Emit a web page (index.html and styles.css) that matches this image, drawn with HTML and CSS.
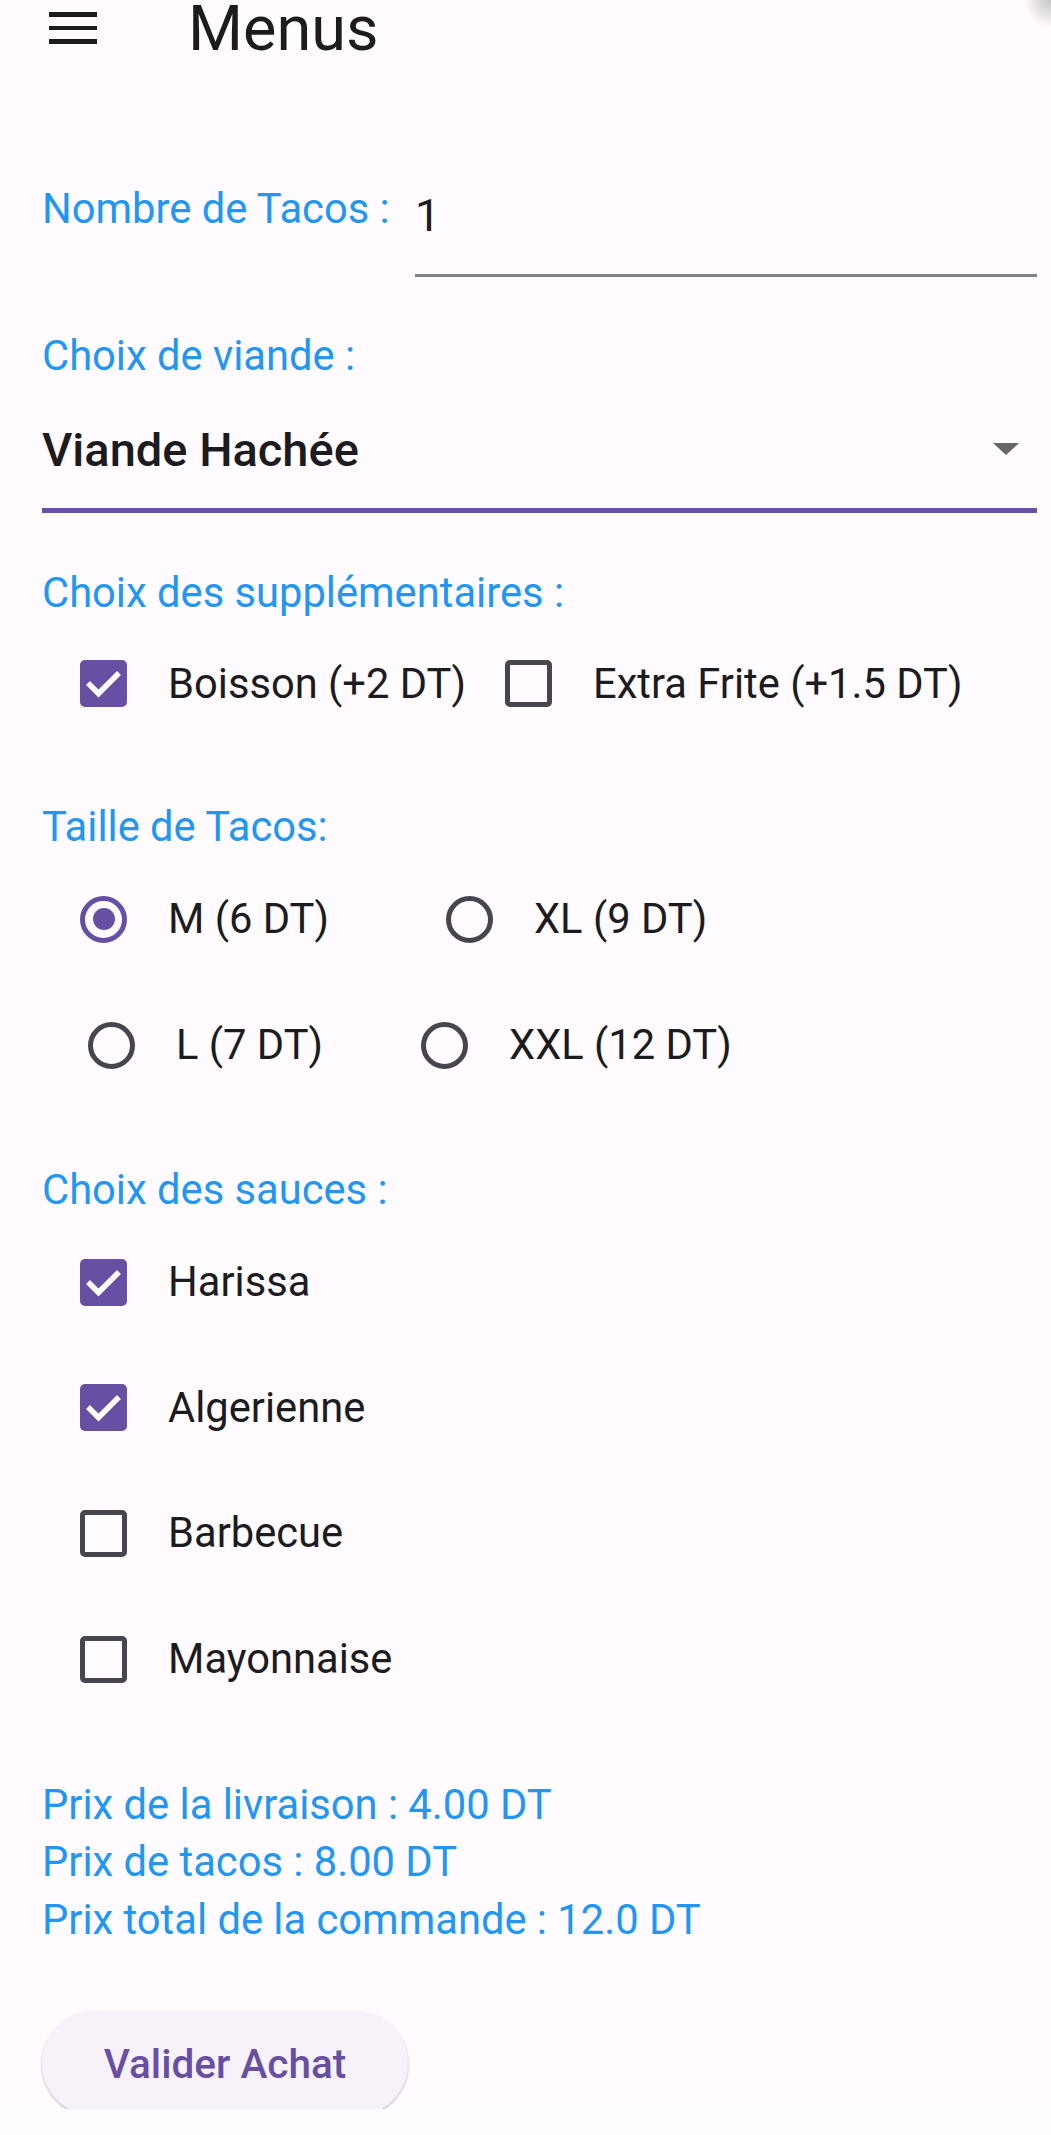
FILE: index.html
```html
<!DOCTYPE html>
<html lang="fr">
<head>
<meta charset="utf-8">
<title>Menus</title>
<link rel="stylesheet" href="styles.css">
</head>
<body>
<div class="screen">
  <div class="corner"></div>
  <header class="appbar">
    <div class="menu-icon"><span></span><span></span><span></span></div>
    <div class="title">Menus</div>
  </header>

  <main class="content">
    <div class="qty-row">
      <div class="label">Nombre de Tacos :</div>
      <div class="qty-input">1</div>
    </div>

    <div class="label sec-viande">Choix de viande :</div>
    <div class="dropdown">
      <span class="dropdown-value">Viande Hachée</span>
      <span class="dropdown-arrow"></span>
    </div>

    <div class="label sec-supp">Choix des supplémentaires :</div>
    <div class="opt-row supp-row">
      <span class="cb checked"><svg viewBox="0 0 47 47"><polyline points="8,23 18.5,33.5 39,13"/></svg></span>
      <span class="opt-text">Boisson (+2 DT)</span>
      <span class="cb cb-extra"></span>
      <span class="opt-text">Extra Frite (+1.5 DT)</span>
    </div>

    <div class="label sec-taille">Taille de Tacos:</div>
    <div class="opt-row radio-row1">
      <span class="radio selected r-m"></span>
      <span class="opt-text">M (6 DT)</span>
      <span class="radio r-xl"></span>
      <span class="opt-text">XL (9 DT)</span>
    </div>
    <div class="opt-row radio-row2">
      <span class="radio r-l"></span>
      <span class="opt-text">L (7 DT)</span>
      <span class="radio r-xxl"></span>
      <span class="opt-text">XXL (12 DT)</span>
    </div>

    <div class="label sec-sauces">Choix des sauces :</div>
    <div class="sauces">
      <div class="opt-row">
        <span class="cb checked"><svg viewBox="0 0 47 47"><polyline points="8,23 18.5,33.5 39,13"/></svg></span>
        <span class="opt-text">Harissa</span>
      </div>
      <div class="opt-row">
        <span class="cb checked"><svg viewBox="0 0 47 47"><polyline points="8,23 18.5,33.5 39,13"/></svg></span>
        <span class="opt-text">Algerienne</span>
      </div>
      <div class="opt-row">
        <span class="cb"></span>
        <span class="opt-text">Barbecue</span>
      </div>
      <div class="opt-row">
        <span class="cb"></span>
        <span class="opt-text">Mayonnaise</span>
      </div>
    </div>

    <div class="prices">
      <div>Prix de la livraison : 4.00 DT</div>
      <div>Prix de tacos : 8.00 DT</div>
      <div>Prix total de la commande : 12.0 DT</div>
    </div>

    <button class="btn">Valider Achat</button>
  </main>
</div>
<div class="bottom-strip"></div>
</body>
</html>
```

FILE: styles.css
```css
html, body {
  margin: 0;
  padding: 0;
  background: #fffbfe;
  font-family: Roboto, "Liberation Sans", Arial, sans-serif;
  color: #1c1b1f;
}

.screen {
  position: relative;
  height: 2109px;
  overflow: hidden;
  background: #fffbfe;
}

.corner {
  position: absolute;
  top: 0;
  right: 0;
  width: 40px;
  height: 40px;
  background: radial-gradient(circle at 100% 0, rgba(0,0,0,0.22), rgba(0,0,0,0) 28px);
}

.bottom-strip {
  height: 26px;
  background: #fffcff;
}

/* App bar */
.appbar {
  height: 70px;
  display: flex;
  align-items: flex-start;
  padding-top: 4px;
  box-sizing: border-box;
}

.menu-icon {
  margin-left: 49px;
  margin-top: 8px;
  width: 48px;
  display: flex;
  flex-direction: column;
  gap: 9px;
}

.menu-icon span {
  display: block;
  height: 4.5px;
  background: #1c1b1f;
}

.title {
  margin-left: 91px;
  font-size: 63px;
  line-height: 50px;
  color: #1c1b1f;
}

/* Content */
.content {
  padding: 0 14px 0 42px;
}

.label {
  font-size: 41.7px;
  line-height: 50px;
  color: #2196f3;
}

.qty-row {
  margin-top: 113.5px;
  display: flex;
  align-items: flex-start;
}

.qty-input {
  margin-left: auto;
  margin-top: 4px;
  width: 622px;
  height: 86px;
  font-size: 45px;
  line-height: 56px;
  border-bottom: 3px solid #85818a;
  box-sizing: content-box;
}

.sec-viande { margin-top: 54px; }

.dropdown {
  margin-top: 41px;
  height: 86px;
  border-bottom: 5px solid #6750a4;
  display: flex;
  align-items: flex-start;
  justify-content: space-between;
}

.dropdown-value {
  font-size: 47px;
  line-height: 56px;
  font-weight: 500;
}

.dropdown-arrow {
  margin-top: 21px;
  margin-right: 18px;
  width: 0;
  height: 0;
  border-left: 13px solid transparent;
  border-right: 13px solid transparent;
  border-top: 12px solid #666666;
}

.sec-supp { margin-top: 55px; }

.opt-row {
  display: flex;
  align-items: center;
  height: 48px;
}

.opt-text {
  font-size: 41.7px;
  line-height: 48px;
  color: #1c1b1f;
  margin-left: 41px;
}

.supp-row {
  margin-top: 42px;
}

.cb {
  flex: none;
  width: 47px;
  height: 47px;
  box-sizing: border-box;
  border: 5px solid #49454f;
  border-radius: 5px;
  margin-left: 38px;
  display: flex;
}

.cb.checked {
  background: #6750a4;
  border-color: #6750a4;
}

.cb svg {
  width: 47px;
  height: 47px;
  margin: -5px;
  fill: none;
  stroke: #ffffff;
  stroke-width: 5.5;
}

.cb-extra { margin-left: 39px; }

.sec-taille { margin-top: 94px; }

.radio {
  flex: none;
  width: 47px;
  height: 47px;
  box-sizing: border-box;
  border: 5px solid #49454f;
  border-radius: 50%;
  display: flex;
  align-items: center;
  justify-content: center;
}

.radio.selected {
  border-color: #6750a4;
}

.radio.selected::after {
  content: "";
  width: 22px;
  height: 22px;
  border-radius: 50%;
  background: #6750a4;
}

.radio-row1 {
  margin-top: 44px;
  height: 47px;
}

.radio-row2 {
  margin-top: 79px;
  height: 47px;
}

.r-m { margin-left: 38px; }
.r-xl { margin-left: 117px; }
.r-l { margin-left: 46px; }
.r-xxl { margin-left: 98px; }

.sec-sauces { margin-top: 96px; }

.sauces {
  margin-top: 44px;
  display: flex;
  flex-direction: column;
  gap: 78.7px;
}

.sauces .opt-row {
  height: 47px;
}

.prices {
  margin-top: 93px;
  font-size: 41.7px;
  line-height: 57.5px;
  color: #2196f3;
}

.btn {
  display: block;
  margin-top: 63px;
  width: 366px;
  height: 105px;
  border: none;
  border-radius: 53px;
  background: #f7f2fa;
  box-shadow: 0 1.5px 3px rgba(0,0,0,0.25);
  font-family: Roboto, "Liberation Sans", Arial, sans-serif;
  font-size: 40.5px;
  font-weight: 500;
  color: #6750a4;
  padding: 0;
}
```
